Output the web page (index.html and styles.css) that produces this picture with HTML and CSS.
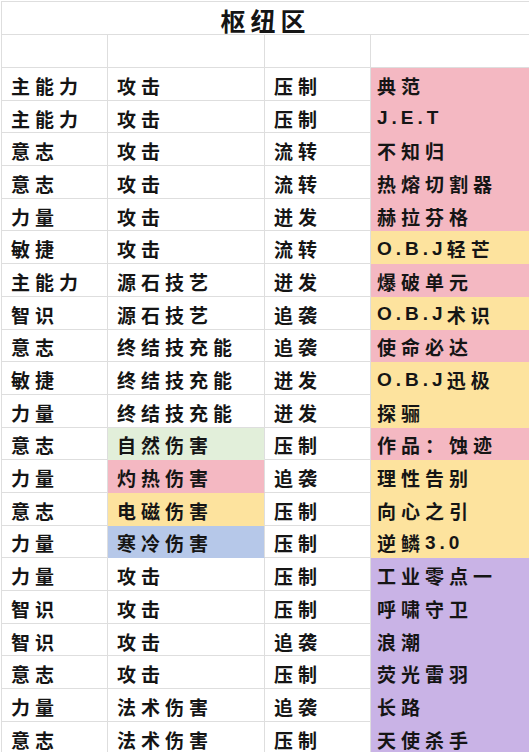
FILE: index.html
```html
<!DOCTYPE html>
<html lang="zh-CN">
<head>
<meta charset="utf-8">
<title>枢纽区</title>
<link rel="stylesheet" href="styles.css">
</head>
<body>
<div class="sheet">
  <div class="title">枢纽区</div>
  <div class="cell blank"></div><div class="cell blank"></div><div class="cell blank"></div><div class="cell blank last"></div>

  <div class="cell">主能力</div><div class="cell">攻击</div><div class="cell">压制</div><div class="cell last pink">典范</div>
  <div class="cell">主能力</div><div class="cell">攻击</div><div class="cell">压制</div><div class="cell last pink latin">J.E.T</div>
  <div class="cell">意志</div><div class="cell">攻击</div><div class="cell">流转</div><div class="cell last pink">不知归</div>
  <div class="cell">意志</div><div class="cell">攻击</div><div class="cell">流转</div><div class="cell last pink">热熔切割器</div>
  <div class="cell">力量</div><div class="cell">攻击</div><div class="cell">迸发</div><div class="cell last pink">赫拉芬格</div>
  <div class="cell">敏捷</div><div class="cell">攻击</div><div class="cell">流转</div><div class="cell last yellow"><span class="lat">O.B.J</span>轻芒</div>
  <div class="cell">主能力</div><div class="cell">源石技艺</div><div class="cell">迸发</div><div class="cell last pink">爆破单元</div>
  <div class="cell">智识</div><div class="cell">源石技艺</div><div class="cell">追袭</div><div class="cell last yellow"><span class="lat">O.B.J</span>术识</div>
  <div class="cell">意志</div><div class="cell">终结技充能</div><div class="cell">追袭</div><div class="cell last pink">使命必达</div>
  <div class="cell">敏捷</div><div class="cell">终结技充能</div><div class="cell">迸发</div><div class="cell last yellow"><span class="lat">O.B.J</span>迅极</div>
  <div class="cell">力量</div><div class="cell">终结技充能</div><div class="cell">迸发</div><div class="cell last yellow">探骊</div>
  <div class="cell">意志</div><div class="cell green">自然伤害</div><div class="cell">压制</div><div class="cell last pink">作品：蚀迹</div>
  <div class="cell">力量</div><div class="cell pink">灼热伤害</div><div class="cell">追袭</div><div class="cell last yellow">理性告别</div>
  <div class="cell">意志</div><div class="cell yellow">电磁伤害</div><div class="cell">压制</div><div class="cell last yellow">向心之引</div>
  <div class="cell">力量</div><div class="cell blue">寒冷伤害</div><div class="cell">压制</div><div class="cell last yellow">逆鳞<span class="lat">3.0</span></div>
  <div class="cell">力量</div><div class="cell">攻击</div><div class="cell">压制</div><div class="cell last purple">工业零点一</div>
  <div class="cell">智识</div><div class="cell">攻击</div><div class="cell">压制</div><div class="cell last purple">呼啸守卫</div>
  <div class="cell">智识</div><div class="cell">攻击</div><div class="cell">追袭</div><div class="cell last purple">浪潮</div>
  <div class="cell">意志</div><div class="cell">攻击</div><div class="cell">压制</div><div class="cell last purple">荧光雷羽</div>
  <div class="cell">力量</div><div class="cell">法术伤害</div><div class="cell">追袭</div><div class="cell last purple">长路</div>
  <div class="cell">意志</div><div class="cell">法术伤害</div><div class="cell">压制</div><div class="cell last purple">天使杀手</div>
</div>
</body>
</html>
```

FILE: styles.css
```css
* { box-sizing: border-box; }
html, body {
  margin: 0;
  padding: 0;
  background: #ffffff;
}
body {
  width: 529px;
  height: 752px;
  overflow: hidden;
  font-family: "Liberation Sans", "Noto Sans CJK SC", sans-serif;
  color: #151515;
}
.sheet {
  margin-left: 1px;
  margin-top: 1px;
  display: grid;
  grid-template-columns: 106px 157px 106px 1fr;
  grid-template-rows: 33px 33px repeat(21, 32.7px);
  border-left: 1px solid #dedede;
  border-top: 1px solid #dedede;
}
.title {
  grid-column: 1 / 5;
  display: flex;
  align-items: center;
  justify-content: center;
  padding-left: 0;
  padding-top: 3px;
  font-family: "Noto Sans CJK SC", sans-serif;
  font-weight: 700;
  font-size: 25px;
  letter-spacing: 5px;
  border-bottom: 1px solid #dedede;
}
.cell {
  display: flex;
  align-items: center;
  padding: 3px 0 0 9px;
  font-family: "Liberation Sans", "Noto Sans CJK SC", sans-serif;
  font-weight: 700;
  font-size: 19px;
  letter-spacing: 5px;
  white-space: nowrap;
  border-right: 1px solid #dedede;
  border-bottom: 1px solid #dedede;
}
.cell.last {
  border-right: none;
  padding-left: 6px;
}
.lat, .latin {
  letter-spacing: 4px;
  font-size: 19px;
}
.pink   { background: #f4b8c2; border-bottom-color: #f4b8c2; }
.yellow { background: #fde39e; border-bottom-color: #fde39e; }
.purple { background: #c9b3e6; border-bottom-color: #c9b3e6; }
.green  { background: #e2efda; border-bottom-color: #e2efda; }
.blue   { background: #b6c8e9; border-bottom-color: #b6c8e9; }
```
